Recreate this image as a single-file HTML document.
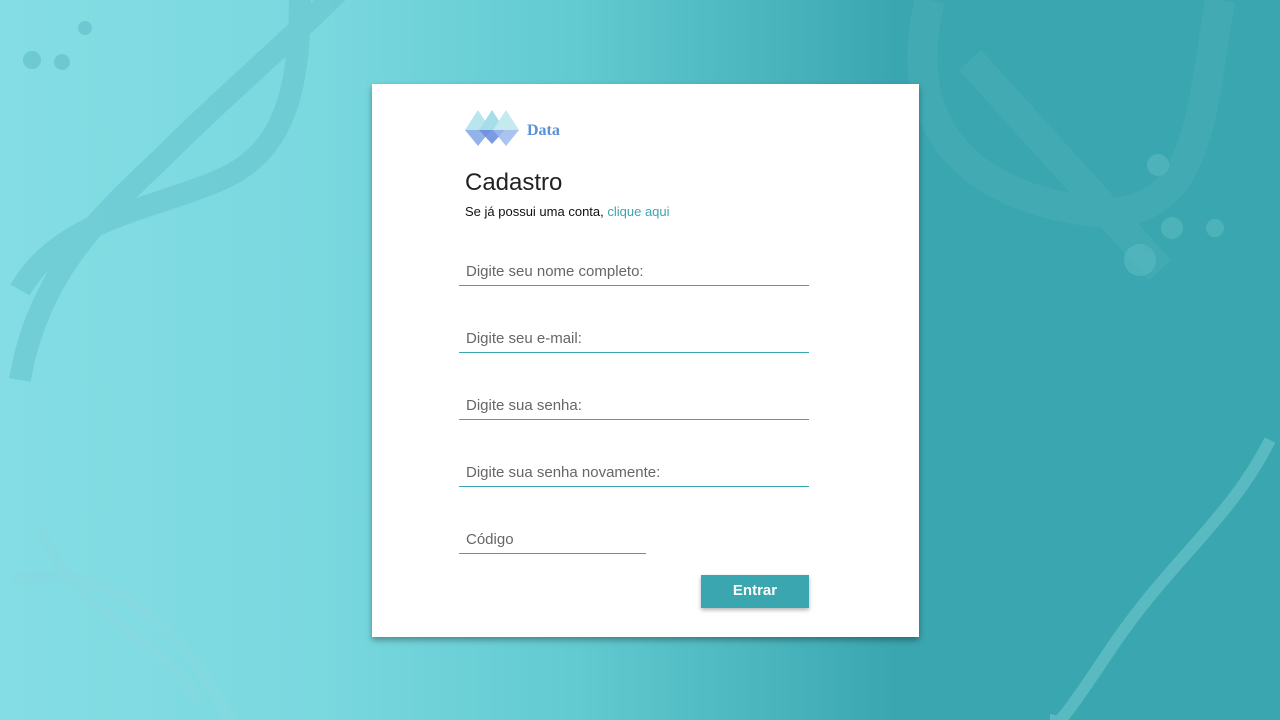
<!DOCTYPE html>
<html><head><meta charset="utf-8"><style>
*{margin:0;padding:0;box-sizing:border-box}
html,body{width:1280px;height:720px;overflow:hidden}
body{font-family:"Liberation Sans",sans-serif;background:linear-gradient(90deg,#84dde4 0%,#7ad8df 25%,#62cad1 45%,#4ab5bd 60%,#3aa6b0 70%,#3aa6b0 100%);position:relative}
svg.bg{position:absolute;left:0;top:0}
.card{position:absolute;left:372px;top:84px;width:547px;height:553px;background:#fff;box-shadow:0 3px 6px rgba(0,0,0,.35)}
h1{position:absolute;left:93px;top:85px;font-size:24px;font-weight:normal;color:#222}
.sub{position:absolute;left:93px;top:120px;font-size:13px;color:#111}
.sub span{color:#3aa6b0}
.f{position:absolute;left:87px;width:350px;border-bottom:1px solid #3aa6b0;height:30px}
.f span{position:absolute;left:7px;top:7px;font-size:15px;color:#666}
.btn{position:absolute;left:329px;top:491px;width:108px;height:33px;background:#3aa6b0;color:#fff;font-weight:bold;font-size:15px;text-align:center;line-height:32px;box-shadow:0 2px 4px rgba(0,0,0,.3)}
</style></head><body>
<svg class="bg" width="1280" height="720" fill="none">
<g stroke="#5fbec7" stroke-width="22" opacity=".45">
<path d="M20 380 C40 260 120 200 170 150 S290 40 340 -10"/>
<path d="M20 290 C60 220 150 210 220 180 S300 80 300 -10"/>
</g>
<g stroke="#4fb0b9" stroke-width="30" opacity=".4">
<path d="M930 0 C900 120 960 190 1080 210 S1200 120 1220 0"/>
<path d="M970 60 L1160 270"/>
</g>
<g stroke="#8ad9df" stroke-width="12" opacity=".4">
<path d="M40 530 C80 620 140 620 200 700"/>
<path d="M10 580 C100 560 180 620 230 720"/>
<path d="M1270 440 C1230 520 1170 560 1110 650 S1060 720 1050 720"/>
</g>
<g fill="#5fbec7" opacity=".6"><circle cx="32" cy="60" r="9"/><circle cx="85" cy="28" r="7"/><circle cx="62" cy="62" r="8"/></g>
<g fill="#57b8c1" opacity=".7"><circle cx="1158" cy="165" r="11"/><circle cx="1172" cy="228" r="11"/><circle cx="1215" cy="228" r="9"/><circle cx="1140" cy="260" r="16"/></g>
</svg>
<div class="card">
<svg style="position:absolute;left:93px;top:26px" width="56" height="38">
<polygon points="0,20 13,0 26,20" fill="#b9e6ee"/>
<polygon points="14,20 27,0 40,20" fill="#a7dde8"/>
<polygon points="28,20 41,0 54,20" fill="#c4e9ef"/>
<polygon points="0,20 26,20 13,36" fill="#7fa6e6" opacity=".85"/>
<polygon points="14,20 40,20 27,34" fill="#6c8fe0" opacity=".9"/>
<polygon points="28,20 54,20 41,36" fill="#9bb8ec" opacity=".85"/>
</svg>
<div style="position:absolute;left:155px;top:38px;font-family:'Liberation Serif',serif;font-weight:bold;font-size:16px;color:#5b8fd6">Data</div>
<h1>Cadastro</h1>
<div class="sub">Se já possui uma conta, <span>clique aqui</span></div>
<div class="f" style="top:172px"><span>Digite seu nome completo:</span></div>
<div class="f" style="top:239px"><span>Digite seu e-mail:</span></div>
<div class="f" style="top:306px"><span>Digite sua senha:</span></div>
<div class="f" style="top:373px"><span>Digite sua senha novamente:</span></div>
<div class="f" style="top:440px;width:187px"><span>Código</span></div>
<div class="btn">Entrar</div>
</div>
</body></html>
